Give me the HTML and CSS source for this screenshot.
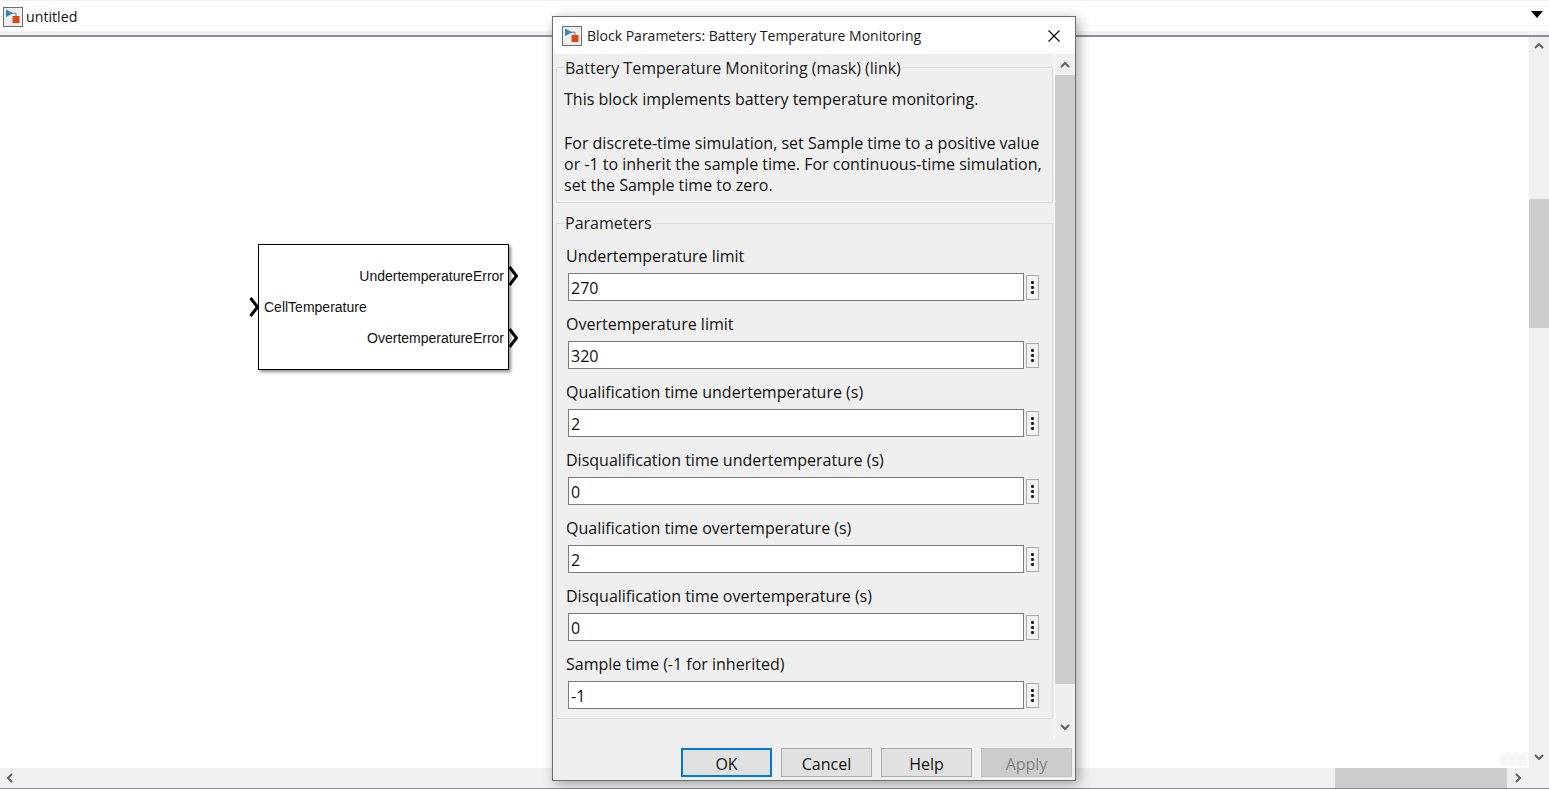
FILE: index.html
```html
<!DOCTYPE html>
<html lang="en">
  <head>
    <meta charset="UTF-8" />
    <title>untitled</title>
    <link rel="stylesheet" href="styles.css">
  </head>
  <body>
    <div class="app">
      <div class="topbar">
        <svg class="appicon" viewBox="0 0 20 20" width="20" height="20">
          <rect x="0.5" y="0.5" width="19" height="19" fill="#eeeeee" stroke="#6f6f6f"/>
          <path d="M3 2.5 L3 10 L10 6.2 Z" fill="#2a86c8"/>
          <path d="M3 6.2 H13 V9" fill="none" stroke="#5a7f9a"/>
          <rect x="9.5" y="9" width="7" height="7" fill="#d8481c"/>
        </svg>
        <span class="appname">untitled</span>
        <svg class="dropdown" viewBox="0 0 12 7" width="12" height="7"><path d="M0 0 H12 L6 7 Z" fill="#000"/></svg>
      </div>

      <div class="middle">
        <div class="canvas">
          <div class="block">
            <svg class="port port-in" viewBox="0 0 10 20" width="10" height="20"><path d="M1.5 1 L8.5 10 L1.5 19" fill="none" stroke="#000" stroke-width="3"/></svg>
            <svg class="port port-out1" viewBox="0 0 10 20" width="10" height="20"><path d="M1.5 1 L8.5 10 L1.5 19" fill="none" stroke="#000" stroke-width="3"/></svg>
            <svg class="port port-out2" viewBox="0 0 10 20" width="10" height="20"><path d="M1.5 1 L8.5 10 L1.5 19" fill="none" stroke="#000" stroke-width="3"/></svg>
            <div class="block-col left"><span>CellTemperature</span></div>
            <div class="block-col right">
              <span>UndertemperatureError</span>
              <span>OvertemperatureError</span>
            </div>
          </div>
          <div class="ghost"><i></i><i></i><i></i></div>
        </div>
        <div class="vscroll">
          <svg class="arrow" viewBox="0 0 10 6" width="10" height="6"><path d="M1 5 L5 1 L9 5" fill="none" stroke="#606060" stroke-width="2"/></svg>
          <div class="vtrack"><div class="vthumb"></div></div>
          <svg class="arrow" viewBox="0 0 10 6" width="10" height="6"><path d="M1 1 L5 5 L9 1" fill="none" stroke="#606060" stroke-width="2"/></svg>
        </div>
      </div>

      <div class="hscroll">
        <svg class="harrow" viewBox="0 0 6 10" width="6" height="10"><path d="M5 1 L1 5 L5 9" fill="none" stroke="#606060" stroke-width="2"/></svg>
        <div class="htrack"><div class="hthumb"></div></div>
        <svg class="harrow" viewBox="0 0 6 10" width="6" height="10"><path d="M1 1 L5 5 L1 9" fill="none" stroke="#606060" stroke-width="2"/></svg>
        <div class="hcorner"></div>
      </div>
    </div>

    <div class="dialog">
      <div class="titlebar">
        <svg class="appicon" viewBox="0 0 20 20" width="20" height="20">
          <rect x="0.5" y="0.5" width="19" height="19" fill="#eeeeee" stroke="#6f6f6f"/>
          <path d="M3 2.5 L3 10 L10 6.2 Z" fill="#2a86c8"/>
          <path d="M3 6.2 H13 V9" fill="none" stroke="#5a7f9a"/>
          <rect x="9.5" y="9" width="7" height="7" fill="#d8481c"/>
        </svg>
        <span class="title">Block Parameters: Battery Temperature Monitoring</span>
        <svg class="close" viewBox="0 0 12 12" width="12" height="12"><path d="M0.5 0.5 L11.5 11.5 M11.5 0.5 L0.5 11.5" stroke="#000" stroke-width="1.1"/></svg>
      </div>

      <div class="dialog-main">
        <div class="pane">
          <fieldset class="group desc">
            <legend>Battery Temperature Monitoring (mask) (link)</legend>
            <p>This block implements battery temperature monitoring.</p>
            <p>For discrete-time simulation, set Sample time to a positive value<br>or -1 to inherit the sample time. For continuous-time simulation,<br>set the Sample time to zero.</p>
          </fieldset>

          <fieldset class="group params">
            <legend>Parameters</legend>
            <div class="field">
              <label>Undertemperature limit</label>
              <div class="input-row"><div class="input">270</div><div class="dots"><i></i><i></i><i></i></div></div>
            </div>
            <div class="field">
              <label>Overtemperature limit</label>
              <div class="input-row"><div class="input">320</div><div class="dots"><i></i><i></i><i></i></div></div>
            </div>
            <div class="field">
              <label>Qualification time undertemperature (s)</label>
              <div class="input-row"><div class="input">2</div><div class="dots"><i></i><i></i><i></i></div></div>
            </div>
            <div class="field">
              <label>Disqualification time undertemperature (s)</label>
              <div class="input-row"><div class="input">0</div><div class="dots"><i></i><i></i><i></i></div></div>
            </div>
            <div class="field">
              <label>Qualification time overtemperature (s)</label>
              <div class="input-row"><div class="input">2</div><div class="dots"><i></i><i></i><i></i></div></div>
            </div>
            <div class="field">
              <label>Disqualification time overtemperature (s)</label>
              <div class="input-row"><div class="input">0</div><div class="dots"><i></i><i></i><i></i></div></div>
            </div>
            <div class="field">
              <label>Sample time (-1 for inherited)</label>
              <div class="input-row"><div class="input">-1</div><div class="dots"><i></i><i></i><i></i></div></div>
            </div>
          </fieldset>
        </div>

        <div class="dscroll">
          <svg class="arrow" viewBox="0 0 10 6" width="10" height="6"><path d="M1 5 L5 1 L9 5" fill="none" stroke="#606060" stroke-width="2"/></svg>
          <div class="dthumb"></div>
          <svg class="arrow" viewBox="0 0 10 6" width="10" height="6"><path d="M1 1 L5 5 L9 1" fill="none" stroke="#606060" stroke-width="2"/></svg>
        </div>
      </div>

      <div class="buttons">
        <button class="btn default">OK</button>
        <button class="btn">Cancel</button>
        <button class="btn">Help</button>
        <button class="btn disabled">Apply</button>
      </div>
    </div>
  </body>
</html>
```

FILE: styles.css
```css
html, body {
  margin: 0;
  height: 100%;
  overflow: hidden;
}
body {
  position: relative;
  width: 1549px;
  height: 789px;
  background: #fff;
  font-family: "Open Sans", "Noto Sans", sans-serif;
  color: #111;
}
.app {
  display: flex;
  flex-direction: column;
  height: 789px;
}

/* top bar */
.topbar {
  height: 31px;
  padding: 1px 6px 3px 3px;
  background: #fff;
  box-shadow: inset 0 -4px 0 #f3f3f3, inset 0 1px 0 #f3f3f3;
  border-bottom: 2px solid #8b8d94;
  display: flex;
  align-items: center;
  flex: none;
}
.appicon {
  flex: none;
}
.appname {
  margin-left: 3px;
  font-size: 14.2px;
  flex: 1;
}
.dropdown {
  margin-top: -5px;
}

/* canvas */
.middle {
  flex: 1;
  display: flex;
  min-height: 0;
}
.canvas {
  flex: 1;
  position: relative;
}
.block {
  position: absolute;
  left: 258px;
  top: 207px;
  width: 249px;
  height: 124px;
  border: 1.5px solid #000;
  background: #fff;
  box-shadow: 2px 2px 3px rgba(0, 0, 0, 0.45);
  display: flex;
  justify-content: space-between;
  font-family: "Liberation Sans", sans-serif;
  font-size: 14px;
  color: #111;
  white-space: nowrap;
}
.block-col {
  display: flex;
  flex-direction: column;
  justify-content: space-around;
}
.block-col.left {
  padding-left: 5px;
  width: 90px;
}
.block-col.right {
  align-items: flex-end;
  padding: 0 4px 0 0;
}
.block-col.right span {
  padding: 7px 0;
}
.port {
  position: absolute;
}
.port-in {
  left: -10px;
  top: 52px;
}
.port-out1 {
  left: 249px;
  top: 21px;
}
.port-out2 {
  left: 249px;
  top: 83px;
}
.ghost {
  position: absolute;
  right: 2px;
  bottom: 2px;
  display: flex;
  gap: 1px;
}
.ghost i {
  display: block;
  width: 7px;
  height: 13px;
  background: #f6f6f6;
}
.ghost i:last-child {
  width: 11px;
}

/* page scrollbars */
.vscroll {
  width: 20px;
  background: #f0f0f0;
  display: flex;
  flex-direction: column;
  align-items: center;
  padding: 6px 0 8px;
  flex: none;
}
.arrow {
  flex: none;
}
.vtrack {
  flex: 1;
  width: 100%;
  padding-top: 150px;
}
.vthumb {
  height: 129px;
  background: #cdcdcd;
}
.hscroll {
  flex: none;
  background: #f0f0f0;
  border-bottom: 1px solid #8b8b99;
  display: flex;
  align-items: center;
  box-sizing: border-box;
  height: 21px;
  padding-left: 7px;
}
.htrack {
  flex: 1;
  height: 100%;
  padding-left: 1322px;
  padding-right: 7px;
  box-sizing: border-box;
}
.hthumb {
  width: 172px;
  height: 100%;
  background: #cdcdcd;
}
.hcorner {
  width: 28px;
  flex: none;
}

/* dialog window */
.dialog {
  position: absolute;
  left: 552px;
  top: 16px;
  width: 522px;
  height: 763px;
  border: 1px solid #6e6e6e;
  background: #efefef;
  box-shadow: 3px 3px 12px rgba(0, 0, 0, 0.35);
  display: flex;
  flex-direction: column;
}
.titlebar {
  height: 37px;
  flex: none;
  background: #fff;
  display: flex;
  align-items: center;
  padding: 0 15px 0 9px;
}
.title {
  flex: 1;
  margin-left: 5px;
  font-size: 14px;
  color: #1a1a1a;
}
.dialog-main {
  display: flex;
  height: 684px;
  flex: none;
}
.pane {
  width: 502px;
  padding: 3px 0 0 3px;
  box-sizing: border-box;
  border-right: 1px solid #fff;
  flex: none;
}
.group {
  margin: 0;
  width: 497px;
  box-sizing: border-box;
  border: 1px solid #dcdcdc;
  border-radius: 0;
  min-width: 0;
  padding: 0;
}
.group legend {
  margin-left: 7px;
  padding: 0 1px;
  font-size: 16px;
  line-height: 20px;
  color: #1a1a1a;
}
.desc {
  height: 146px;
  padding-top: 12px;
}
.desc legend {
  padding-top: 1px;
  margin-bottom: -1px;
}
.desc p {
  margin: 0 0 23px 7px;
  font-size: 16px;
  line-height: 21px;
  color: #111;
}
.params {
  margin-top: 10px;
  height: 506px;
}
.field {
  margin-left: 9px;
  height: 68px;
}
.field label {
  display: block;
  font-size: 16px;
  line-height: 20px;
  padding-top: 13px;
  height: 20px;
}
.input-row {
  display: flex;
  align-items: center;
  margin-top: 7px;
  margin-left: 2px;
}
.input {
  width: 456px;
  height: 28px;
  box-sizing: border-box;
  border: 1px solid #7a7a7a;
  background: #fff;
  font-size: 16px;
  line-height: 28px;
  padding-left: 2px;
  color: #111;
}
.dots {
  width: 13px;
  height: 25px;
  margin-left: 2px;
  box-sizing: border-box;
  border: 1px solid #adadad;
  background: #f3f3f3;
  display: flex;
  flex-direction: column;
  align-items: center;
  justify-content: center;
  gap: 2px;
}
.dots i {
  display: block;
  width: 3px;
  height: 3px;
  border-radius: 1px;
  background: #222;
}
.dscroll {
  flex: 1;
  display: flex;
  flex-direction: column;
  align-items: center;
  padding-top: 8px;
}
.dthumb {
  width: 100%;
  height: 609px;
  margin: 7px 0 40px;
  background: #cdcdcd;
}

/* buttons */
.buttons {
  flex: 1;
  display: flex;
  justify-content: flex-end;
  gap: 9px;
  padding: 10px 3px 0 0;
}
.btn {
  width: 91px;
  height: 29px;
  box-sizing: border-box;
  border: 1px solid #adadad;
  background: #e1e1e1;
  font-family: inherit;
  font-size: 16px;
  color: #111;
  padding: 2px 0 0;
}
.btn.default {
  border: 2px solid #0078d7;
}
.btn.disabled {
  background: #cccccc;
  border-color: #bfbfbf;
  color: #838383;
}
```
